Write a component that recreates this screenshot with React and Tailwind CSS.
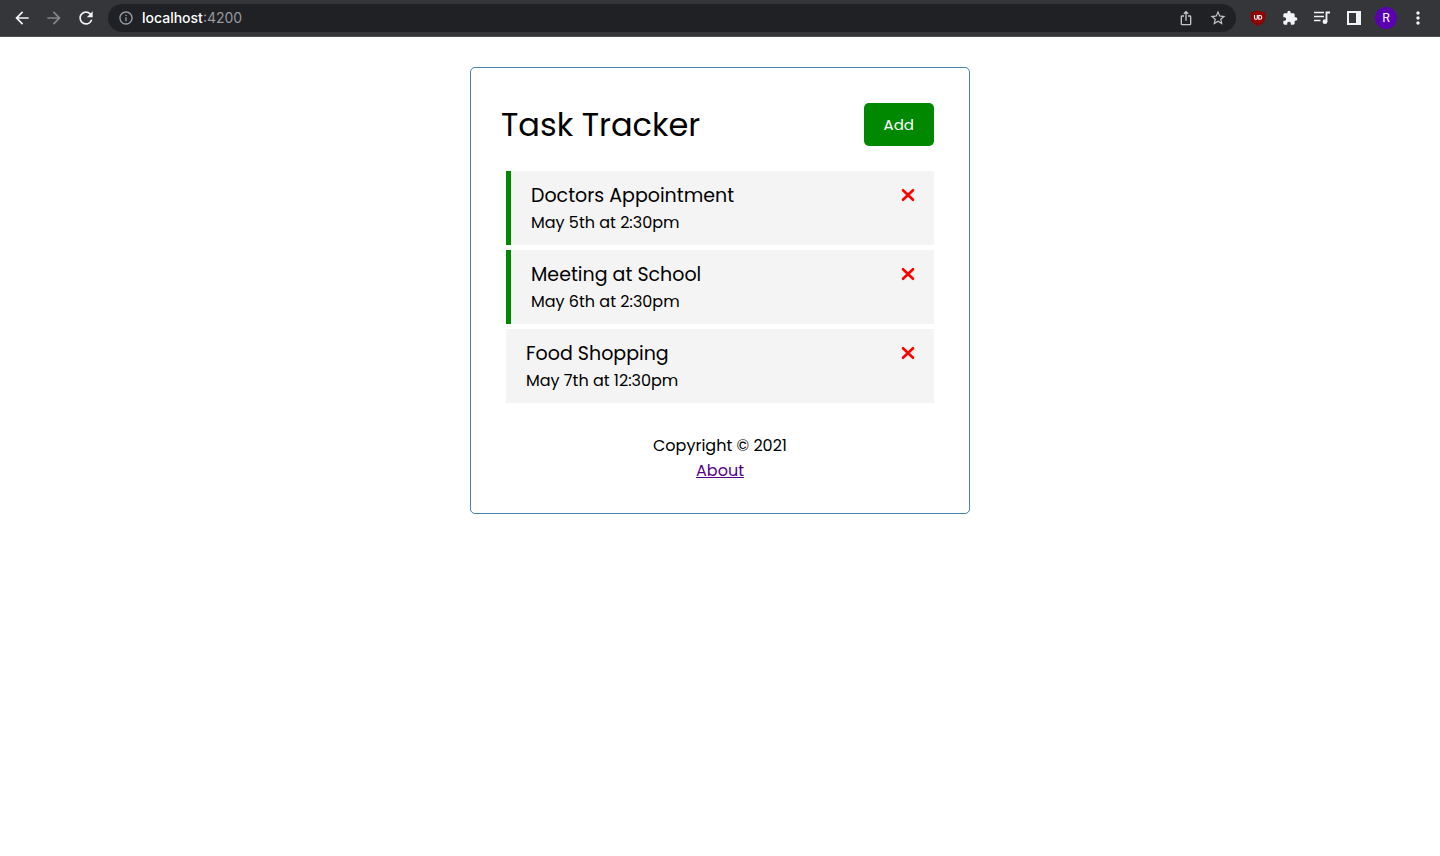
import {
  MdArrowBack,
  MdArrowForward,
  MdRefresh,
  MdInfoOutline,
  MdIosShare,
  MdStarBorder,
  MdExtension,
  MdMoreVert,
} from "react-icons/md";

const tasks = [
  { id: 1, text: "Doctors Appointment", day: "May 5th at 2:30pm", reminder: true },
  { id: 2, text: "Meeting at School", day: "May 6th at 2:30pm", reminder: true },
  { id: 3, text: "Food Shopping", day: "May 7th at 12:30pm", reminder: false },
];

function ToolButton({ label, className = "text-[#f1f3f4]", children }) {
  return (
    <button type="button" aria-label={label} className={`flex size-5 shrink-0 items-center justify-center ${className}`}>
      {children}
    </button>
  );
}

function Shield() {
  return (
    <svg viewBox="0 0 16 16" className="size-4" aria-hidden="true">
      <path d="M8 0.300C6.200 1.700 3.800 2 0.800 2v5.800c0 4.200 3.200 6.200 7.200 8.100 4-1.900 7.200-3.900 7.200-8.100V2c-3 0-5.400-.3-7.200-1.700z" fill="#8f0000" />
      <path d="M4.500 5v2.900a1.400 1.400 0 0 0 2.800 0V5M8.800 5.500h1.100a1.900 1.900 0 0 1 0 3.800H8.800z" fill="none" stroke="#fff" strokeWidth="1.100" />
    </svg>
  );
}

function Playlist() {
  return (
    <svg viewBox="0 0 16 14" className="h-3.5 w-4" fill="none" stroke="currentColor" aria-hidden="true">
      <path d="M0 1.500h10M0 5.500h10M0 9.500h6.500" strokeWidth="1.600" />
      <path d="M12.500 11V1.500H16" strokeWidth="1.800" />
      <circle cx="11" cy="10.700" r="2.400" fill="currentColor" stroke="none" />
    </svg>
  );
}

function SidePanel() {
  return (
    <svg viewBox="0 0 14 14" className="size-3.5" aria-hidden="true">
      <path fill="currentColor" fillRule="evenodd" d="M0 0h14v14H0zM2 2v10h7V2z" />
    </svg>
  );
}

function Cross() {
  return (
    <svg viewBox="0 0 12 12" className="size-3 overflow-visible" aria-hidden="true">
      <path d="M1 1.200l10 9.600M11 1.200L1 10.800" stroke="currentColor" strokeWidth="2.600" strokeLinecap="round" />
    </svg>
  );
}

function BrowserBar() {
  return (
    <header className="flex h-[37px] items-center border-b border-[#505154] bg-[#35363a] px-3 font-[Inter,sans-serif]">
      <nav className="flex gap-3" aria-label="Browser">
        <ToolButton label="Back"><MdArrowBack size={20} /></ToolButton>
        <ToolButton label="Forward" className="text-[#86878a]"><MdArrowForward size={20} /></ToolButton>
        <ToolButton label="Reload"><MdRefresh size={20} /></ToolButton>
      </nav>
      <div className="ml-3 flex h-7 flex-1 items-center rounded-full bg-[#202124] px-2">
        <ToolButton label="Site information" className="text-[#9aa0a6]"><MdInfoOutline size={16} /></ToolButton>
        <button type="button" className="ml-1.5 flex-1 text-left text-sm text-[#96999d]">
          <span className="font-medium text-white">localhost</span>:4200
        </button>
        <div className="flex gap-3">
          <ToolButton label="Share" className="text-[#c4c7ca]"><MdIosShare size={16} /></ToolButton>
          <ToolButton label="Bookmark" className="text-[#c4c7ca]"><MdStarBorder size={18} /></ToolButton>
        </div>
      </div>
      <div className="ml-3 flex items-center gap-3">
        <ToolButton label="Ad blocker"><Shield /></ToolButton>
        <ToolButton label="Extensions"><MdExtension size={16} /></ToolButton>
        <ToolButton label="Media"><Playlist /></ToolButton>
        <ToolButton label="Side panel"><SidePanel /></ToolButton>
        <button type="button" aria-label="Profile" className="-mx-px flex size-[22px] items-center justify-center rounded-full bg-[#5b00b0] text-xs text-white">
          R
        </button>
        <ToolButton label="Menu"><MdMoreVert size={20} /></ToolButton>
      </div>
    </header>
  );
}

function Task({ text, day, reminder }) {
  return (
    <li className={`bg-[#f4f4f4] px-5 pt-3 pb-2 ${reminder ? "border-l-5 border-[#008800]" : ""}`}>
      <div className="flex items-start justify-between">
        <h3 className="text-[19px] leading-[26px]">{text}</h3>
        <button type="button" aria-label={`Delete ${text}`} className="flex h-6 items-center text-[#ff0000]">
          <Cross />
        </button>
      </div>
      <p className="leading-7">{day}</p>
    </li>
  );
}

export default function App() {
  return (
    <div className="min-h-screen bg-white text-black">
      <BrowserBar />
      <main className="mx-auto mt-[30px] max-w-[500px] rounded-[5px] border border-[#4682b4] p-[30px] font-[Poppins,Inter,sans-serif] text-base">
        <div className="flex items-center justify-between py-[5px] pr-[5px]">
          <h1 className="text-[32px] leading-[43px]">Task Tracker</h1>
          <button type="button" className="rounded-[5px] bg-[#008800] px-5 py-2.5 text-[15px] leading-[23px] text-white">
            Add
          </button>
        </div>
        <ul className="mx-[5px] mt-5 flex flex-col gap-[5px]">
          {tasks.map((task) => (
            <Task key={task.id} {...task} />
          ))}
        </ul>
        <footer className="mt-[30px] text-center leading-[25px]">
          <p>Copyright &copy; 2021</p>
          <a href="#about" className="text-[#550088] underline">About</a>
        </footer>
      </main>
    </div>
  );
}
